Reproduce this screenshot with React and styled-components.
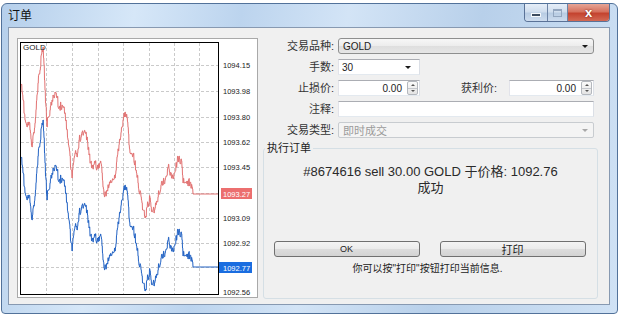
import React from "react";
import styled, { createGlobalStyle } from "styled-components";

const GlobalStyle = createGlobalStyle`
  html, body {
    margin: 0;
    padding: 0;
    background: #ffffff;
  }
  body {
    font-family: "Liberation Sans", "Noto Sans CJK SC", sans-serif;
    color: #1e1e1e;
  }
`;

// key points of the ask line (chart coords), bid line is the same shifted down
const KEY = [
  [21, 85], [23, 100], [25, 120], [27, 127], [29, 122], [30, 130], [32, 147],
  [35, 123], [38, 83], [40, 70], [42, 50], [43, 47], [45, 90], [47, 127],
  [48, 117], [50, 110], [52, 100], [53, 95], [55, 92], [57, 98], [59, 108],
  [62, 105], [64, 107], [66, 120], [68, 140], [71, 170], [72, 178], [73, 165],
  [75, 153], [77, 157], [79, 140], [82, 132], [85, 132], [87, 137], [89, 155],
  [92, 167], [95, 163], [97, 168], [100, 163], [102, 173], [103, 187], [104, 195],
  [107, 190], [110, 183], [113, 180], [115, 178], [117, 157], [120, 140],
  [123, 120], [125, 112], [127, 118], [130, 153], [133, 155], [136, 170],
  [138, 183], [142, 203], [145, 218], [147, 207], [150, 198], [152, 212],
  [155, 208], [158, 197], [161, 185], [165, 180], [167, 175], [168, 167],
  [171, 173], [173, 177], [177, 162], [179, 156], [182, 167], [183, 183],
  [185, 182], [187, 184], [190, 182], [192, 187], [193, 194], [218, 194],
];

// ticks: small stair steps with some noise, same seed for both lines
const buildPath = (dy) => {
  let seed = 11;
  const rnd = () => {
    seed = (seed * 16807) % 2147483647;
    return seed / 2147483647;
  };
  let d = `M${KEY[0][0]} ${KEY[0][1] + dy}`;
  let lastY = KEY[0][1];
  for (let i = 0; i < KEY.length - 1; i++) {
    const [x0, y0] = KEY[i];
    const [x1, y1] = KEY[i + 1];
    const flat = x1 - x0 > 10;
    const steps = flat ? 1 : Math.max(1, Math.round((x1 - x0) * 2));
    for (let s = 1; s <= steps; s++) {
      const x = x0 + ((x1 - x0) * s) / steps;
      let y = y0 + ((y1 - y0) * s) / steps;
      if (!flat && s < steps) y += (rnd() - 0.5) * 9;
      d += ` L${(x - 0.25).toFixed(2)} ${(lastY + dy).toFixed(1)} L${x.toFixed(2)} ${(y + dy).toFixed(1)}`;
      lastY = y;
    }
  }
  return d;
};

const PRICES = [
  ["1094.15", 65], ["1093.98", 91], ["1093.80", 117], ["1093.62", 142],
  ["1093.45", 167], ["1093.09", 218], ["1092.92", 243], ["1092.56", 292],
];
const VGRID = [46, 72, 98, 123, 149, 174, 199];
const HGRID = [65, 91, 117, 142, 167, 193, 218, 243, 267];

const Chart = () => (
  <svg width="239" height="258" viewBox="18 39 239 258">
    <rect x="18" y="39" width="239" height="258" fill="#ffffff" />
    {VGRID.map((x) => (
      <line key={x} x1={x + 0.5} y1="43" x2={x + 0.5} y2="294" stroke="#cacaca" strokeDasharray="3 2" />
    ))}
    {HGRID.map((y) => (
      <line key={y} x1="21" y1={y + 0.5} x2="218" y2={y + 0.5} stroke="#cacaca" strokeDasharray="3 2" />
    ))}
    <path d={buildPath(0)} fill="none" stroke="#e27272" strokeWidth="1" />
    <path d={buildPath(73)} fill="none" stroke="#2363c4" strokeWidth="1" />
    <rect x="20.5" y="42.5" width="198" height="252" fill="none" stroke="#000" />
    <text x="23" y="50" fontSize="8" fontFamily="Liberation Sans" fill="#222">GOLD</text>
    {PRICES.map(([p, y]) => (
      <text key={p} x="223" y={y + 3} fontSize="7.5" fontFamily="Liberation Sans" fill="#222">{p}</text>
    ))}
    <rect x="221" y="188" width="31" height="11" fill="#ec6f6f" />
    <text x="223" y="197" fontSize="7.5" fontFamily="Liberation Sans" fill="#fff">1093.27</text>
    <rect x="219" y="262" width="33" height="11" fill="#1a6de0" />
    <text x="223" y="271" fontSize="7.5" fontFamily="Liberation Sans" fill="#fff">1092.77</text>
  </svg>
);

const Window = styled.div`
  box-sizing: border-box;
  width: 617px;
  height: 311px;
  margin: 3px 0 0 1px;
  border: 1px solid #52729a;
  border-radius: 6px 6px 4px 4px;
  background: linear-gradient(100deg, #b5cfeb 0%, #d6e7f8 20%, #bcd4ee 36%, #d3e4f6 52%, #b8d0ea 72%, #d0e2f5 100%);
  display: flex;
  flex-direction: column;
  padding: 0 7px 8px 6px;
`;

const TitleBar = styled.div`
  height: 23px;
  display: flex;
  align-items: flex-start;
  justify-content: space-between;
`;

const Caption = styled.div`
  font-size: 12px;
  line-height: 12px;
  margin-top: 6px;
  color: #111;
`;

const Controls = styled.div`
  display: flex;
  height: 17px;
  border: 1px solid #5a7297;
  border-top: none;
  border-radius: 0 0 4px 4px;
  overflow: hidden;
`;

const CtlBtn = styled.div`
  width: ${(p) => p.$w}px;
  display: flex;
  align-items: center;
  justify-content: center;
  background: ${(p) =>
    p.$close
      ? "linear-gradient(#e6a596, #d6725f 45%, #c4432f 55%, #d36a55)"
      : "linear-gradient(#e6eef8, #d0deee 45%, #b8cce3 55%, #cddcee)"};
  & + & {
    border-left: 1px solid #6d84a6;
  }
`;

const MinGlyph = styled.div`
  width: 8px;
  height: 2px;
  margin-top: 4px;
  background: #3c4c60;
  border: 1px solid #f4f8fc;
`;

const MaxGlyph = styled.div`
  width: 7px;
  height: 5px;
  border: 1px solid #93a6bf;
  border-top-width: 2px;
`;

const CloseGlyph = styled.div`
  color: #ffffff;
  font-family: "Liberation Sans", sans-serif;
  font-weight: bold;
  font-size: 13px;
  line-height: 13px;
  margin-top: -1px;
  text-shadow: 0 0 2px #6a160a;
`;

const Client = styled.div`
  flex: 1;
  display: flex;
  align-items: flex-start;
  border: 1px solid #8799b1;
  background: #f0f0f0;
  padding: 10px 0 0 8px;
`;

const ChartBox = styled.div`
  width: 239px;
  height: 258px;
  border: 1px solid #a9a9a9;
  background: #fff;
  display: flex;
`;

const RightCol = styled.div`
  width: 335px;
  margin-left: 5px;
  align-self: stretch;
  display: flex;
  flex-direction: column;
`;

const Form = styled.div`
  display: grid;
  grid-template-columns: 71px 256px;
  grid-auto-rows: 16px;
  column-gap: 4px;
  row-gap: 5px;
  font-size: 11px;
`;

const Label = styled.div`
  text-align: right;
  line-height: 16px;
  color: #333;
  white-space: nowrap;
`;

const Field = styled.div`
  box-sizing: border-box;
  width: ${(p) => (p.$w ? `${p.$w}px` : "100%")};
  height: 16px;
  display: flex;
  align-items: center;
  padding: 0 3px;
  font-size: ${(p) => (p.$latin ? "10px" : "11px")};
  justify-content: ${(p) => (p.$right ? "flex-end" : "flex-start")};
  border: 1px solid;
  border-color: #abadb3 #dbdfe6 #e3e9ef #e2e3ea;
  background: #ffffff;
  color: #222;
`;

const DropList = styled(Field)`
  border: 1px solid #8e8f8f;
  border-radius: 3px;
  background: linear-gradient(#f7f7f7, #ececec 50%, #dedede 51%, #e6e6e6);
  justify-content: space-between;
  padding: 0 5px 0 4px;
`;

const LotsCombo = styled(Field)`
  justify-content: space-between;
  padding-right: 8px;
`;

const DisabledCombo = styled(Field)`
  border: 1px solid #c8ccd0;
  border-radius: 2px;
  background: #f4f4f4;
  color: #9a9a9a;
  justify-content: space-between;
  padding: 0 5px 0 4px;
`;

const Arrow = styled.span`
  width: 0;
  height: 0;
  border-left: 3px solid transparent;
  border-right: 3px solid transparent;
  border-top: 3px solid ${(p) => (p.$dim ? "#a8a8a8" : "#1a1a1a")};
`;

const Spinner = styled.div`
  width: 9px;
  height: 12px;
  margin-left: 5px;
  margin-right: -2px;
  display: flex;
  flex-direction: column;
  border: 1px solid #b4b8be;
  border-radius: 2px;
  background: linear-gradient(#fafafa, #e4e4e4);
`;

const SpinHalf = styled.div`
  flex: 1;
  display: flex;
  align-items: center;
  justify-content: center;
  & + & {
    border-top: 1px solid #c4c7cc;
  }
  &::after {
    content: "";
    border-left: 2px solid transparent;
    border-right: 2px solid transparent;
    ${(p) => (p.$up ? "border-bottom: 2px solid #555;" : "border-top: 2px solid #555;")}
  }
`;

const StopsRow = styled.div`
  display: grid;
  grid-template-columns: 82px 1fr 85px;
  column-gap: 12px;
`;

const Group = styled.fieldset`
  flex: 1;
  margin: 3px 0 5px 0;
  padding: 0;
  border: 1px solid #d5dfe5;
  border-radius: 3px;
  display: flex;
  flex-direction: column;
  align-items: center;
  min-width: 0;
`;

const Legend = styled.legend`
  margin-left: 1px;
  padding: 0 2px;
  font-size: 11px;
  line-height: 14px;
  color: #222;
`;

const Message = styled.div`
  margin-top: 9px;
  font-size: 13px;
  line-height: 16px;
  text-align: center;
  color: #2a2a2a;
`;

const ButtonRow = styled.div`
  display: flex;
  gap: 20px;
  margin-top: 45px;
  margin-right: 2px;
`;

const Button = styled.div`
  box-sizing: border-box;
  width: 146px;
  height: 16px;
  border: 1px solid #707070;
  border-radius: 3px;
  background: linear-gradient(#f4f4f4, #ebebeb 50%, #dddddd 51%, #d3d3d3);
  display: flex;
  align-items: center;
  justify-content: center;
  font-size: ${(p) => (p.$latin ? "9px" : "11px")};
  color: #222;
`;

const Note = styled.div`
  margin-top: 5px;
  margin-right: 6px;
  font-size: 10px;
  line-height: 14px;
  color: #222;
`;

const Spin = () => (
  <Spinner>
    <SpinHalf $up />
    <SpinHalf />
  </Spinner>
);

export default function App() {
  return (
    <>
      <GlobalStyle />
      <Window>
        <TitleBar>
          <Caption>订单</Caption>
          <Controls>
            <CtlBtn $w={22}><MinGlyph /></CtlBtn>
            <CtlBtn $w={19}><MaxGlyph /></CtlBtn>
            <CtlBtn $w={41} $close><CloseGlyph>x</CloseGlyph></CtlBtn>
          </Controls>
        </TitleBar>
        <Client>
          <ChartBox>
            <Chart />
          </ChartBox>
          <RightCol>
            <Form>
              <Label>交易品种:</Label>
              <DropList $latin>
                GOLD
                <Arrow />
              </DropList>
              <Label>手数:</Label>
              <LotsCombo $w={82} $latin>
                30
                <Arrow />
              </LotsCombo>
              <Label>止损价:</Label>
              <StopsRow>
                <Field $latin $right>
                  0.00
                  <Spin />
                </Field>
                <Label>获利价:</Label>
                <Field $latin $right>
                  0.00
                  <Spin />
                </Field>
              </StopsRow>
              <Label>注释:</Label>
              <Field />
              <Label>交易类型:</Label>
              <DisabledCombo>
                即时成交
                <Arrow $dim />
              </DisabledCombo>
            </Form>
            <Group>
              <Legend>执行订单</Legend>
              <Message>
                #8674616 sell 30.00 GOLD 于价格: 1092.76
                <br />
                成功
              </Message>
              <ButtonRow>
                <Button $latin>OK</Button>
                <Button>打印</Button>
              </ButtonRow>
              <Note>你可以按"打印"按钮打印当前信息.</Note>
            </Group>
          </RightCol>
        </Client>
      </Window>
    </>
  );
}
